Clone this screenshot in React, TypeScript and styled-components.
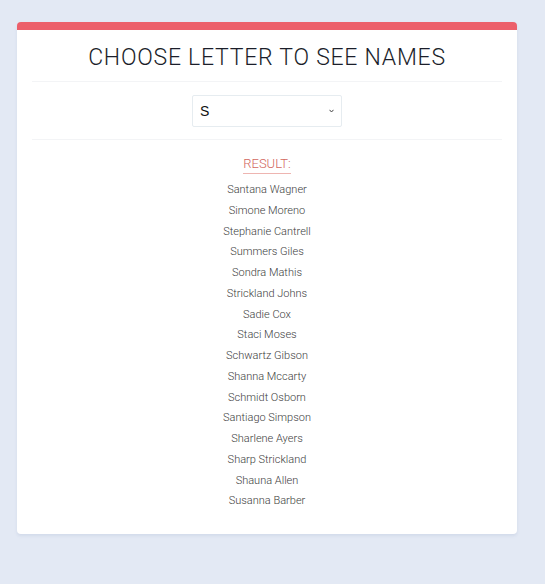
import React, { useState } from "react";
import styled, { createGlobalStyle } from "styled-components";

const Global = createGlobalStyle`
  html, body { margin: 0; padding: 0; background: #e3e9f4; }
  body { font-family: "Roboto", "Liberation Sans", sans-serif; }
`;

const Page = styled.div`
  padding: 22px 0 40px 17px;
  min-height: 584px;
  box-sizing: border-box;
`;

const Card = styled.div`
  width: 500px;
  background: #fff;
  border-radius: 4px;
  border-top: 8px solid #ec5f6a;
  box-shadow: 0 2px 3px rgba(120, 140, 180, 0.15);
  padding: 0 15px 22px;
  box-sizing: border-box;
`;

const Header = styled.div`
  height: 51px;
  display: flex;
  align-items: center;
  justify-content: center;
  border-bottom: 1px solid #f3f4f6;
`;

const Title = styled.h1`
  margin: 0;
  font-family: "Roboto", sans-serif;
  font-weight: 300;
  font-size: 23px;
  letter-spacing: 0.75px;
  color: #1b1e2a;
  padding-top: 4px;
`;

const SelectRow = styled.div`
  height: 57px;
  display: flex;
  align-items: center;
  justify-content: center;
  border-bottom: 1px solid #f3f4f6;
`;

const SelectWrap = styled.div`
  position: relative;
  width: 150px;
  height: 32px;
`;

const Select = styled.select`
  appearance: none;
  -webkit-appearance: none;
  width: 100%;
  height: 100%;
  border: 1px solid #e6ecf0;
  border-radius: 2px;
  background: #fff;
  font-family: "Liberation Sans", Arial, sans-serif;
  font-size: 14px;
  color: #111;
  padding: 0 4px 0 7px;
  outline: none;
`;

const Chevron = styled.svg`
  position: absolute;
  right: 8px;
  top: 14px;
  width: 5px;
  height: 4px;
  pointer-events: none;
`;

const Result = styled.div`
  display: flex;
  flex-direction: column;
  align-items: center;
  padding-top: 16px;
`;

const ResultLabel = styled.div`
  font-family: "Roboto", sans-serif;
  font-weight: 300;
  font-size: 13px;
  color: #d2675e;
  padding-bottom: 2px;
  border-bottom: 1px solid #eeb5b1;
  margin-bottom: 6px;
`;

const Name = styled.div`
  font-family: "Roboto", sans-serif;
  font-weight: 300;
  font-size: 11px;
  line-height: 20.75px;
  color: #3d3d3d;
`;

const names = [
  "Santana Wagner",
  "Simone Moreno",
  "Stephanie Cantrell",
  "Summers Giles",
  "Sondra Mathis",
  "Strickland Johns",
  "Sadie Cox",
  "Staci Moses",
  "Schwartz Gibson",
  "Shanna Mccarty",
  "Schmidt Osborn",
  "Santiago Simpson",
  "Sharlene Ayers",
  "Sharp Strickland",
  "Shauna Allen",
  "Susanna Barber",
];

const letters = "ABCDEFGHIJKLMNOPQRSTUVWXYZ".split("");

export default function App() {
  const [letter, setLetter] = useState("S");
  return (
    <>
      <Global />
      <Page>
        <Card>
          <Header>
            <Title>CHOOSE LETTER TO SEE NAMES</Title>
          </Header>
          <SelectRow>
            <SelectWrap>
              <Select value={letter} onChange={(e) => setLetter(e.target.value)}>
                {letters.map((l) => (
                  <option key={l} value={l}>
                    {l}
                  </option>
                ))}
              </Select>
              <Chevron viewBox="0 0 5 4">
                <path d="M0.5 0.8 L2.5 3 L4.5 0.8" fill="none" stroke="#444" strokeWidth="1" />
              </Chevron>
            </SelectWrap>
          </SelectRow>
          <Result>
            <ResultLabel>RESULT:</ResultLabel>
            {names.map((n) => (
              <Name key={n}>{n}</Name>
            ))}
          </Result>
        </Card>
      </Page>
    </>
  );
}
